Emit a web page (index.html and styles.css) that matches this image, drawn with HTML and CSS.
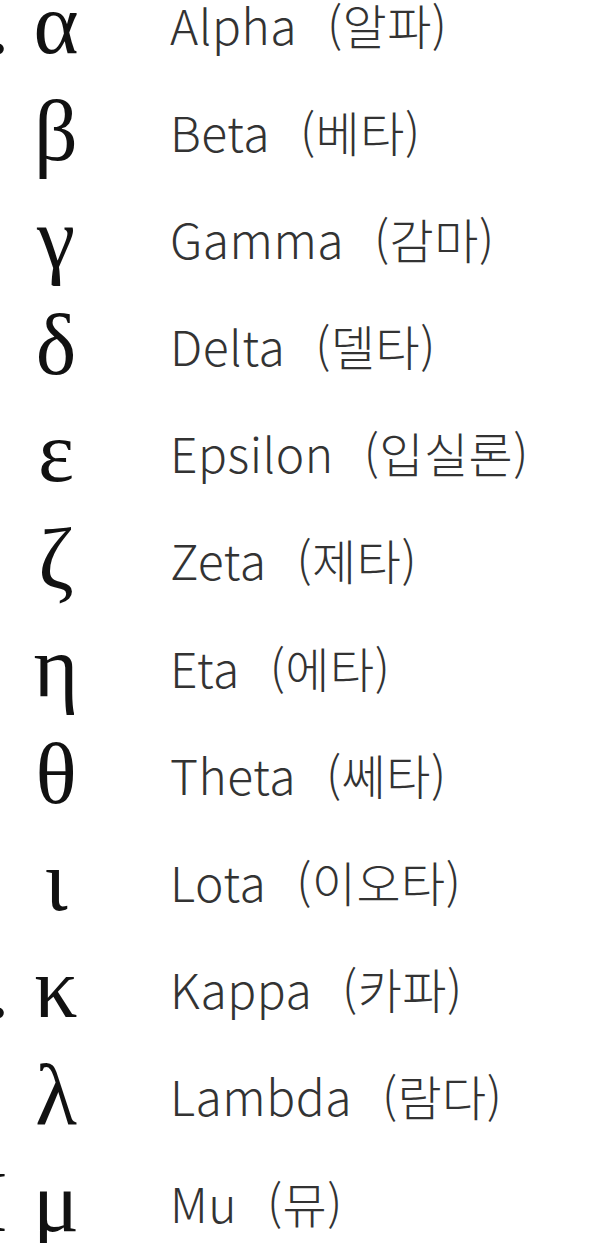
FILE: index.html
```html
<!DOCTYPE html>
<html lang="ko">
<head>
<meta charset="utf-8">
<title>Greek letters</title>
<link rel="stylesheet" href="styles.css">
</head>
<body>
<ul class="list">
  <li class="row"><span class="edge edge-dot">.</span><span class="glyph">α</span><span class="name">Alpha (알파)</span></li>
  <li class="row"><span class="edge"></span><span class="glyph">β</span><span class="name">Beta (베타)</span></li>
  <li class="row"><span class="edge"></span><span class="glyph">γ</span><span class="name">Gamma (감마)</span></li>
  <li class="row"><span class="edge"></span><span class="glyph">δ</span><span class="name">Delta (델타)</span></li>
  <li class="row"><span class="edge"></span><span class="glyph">ε</span><span class="name">Epsilon (입실론)</span></li>
  <li class="row"><span class="edge"></span><span class="glyph">ζ</span><span class="name">Zeta (제타)</span></li>
  <li class="row"><span class="edge"></span><span class="glyph">η</span><span class="name">Eta (에타)</span></li>
  <li class="row"><span class="edge"></span><span class="glyph">θ</span><span class="name">Theta (쎄타)</span></li>
  <li class="row"><span class="edge"></span><span class="glyph">ι</span><span class="name">Lota (이오타)</span></li>
  <li class="row"><span class="edge edge-dot">.</span><span class="glyph">κ</span><span class="name">Kappa (카파)</span></li>
  <li class="row"><span class="edge"></span><span class="glyph">λ</span><span class="name">Lambda (람다)</span></li>
  <li class="row"><span class="edge edge-bar">I</span><span class="glyph">μ</span><span class="name">Mu (뮤)</span></li>
</ul>
</body>
</html>
```

FILE: styles.css
```css
html, body {
  margin: 0;
  padding: 0;
  background: #ffffff;
  overflow: hidden;
}

.list {
  list-style: none;
  margin: 0;
  padding: 0;
}

.row {
  height: 107.1px;
  font-size: 0;
  line-height: 0;
  white-space: nowrap;
}

.edge {
  display: inline-block;
  width: 8px;
  font-family: "Liberation Serif", serif;
  font-size: 86px;
  line-height: 48px;
  color: #111;
  vertical-align: -8px;
}

.edge-dot {
  text-indent: -12px;
}

.edge-bar {
  text-indent: -21px;
}

.glyph {
  display: inline-block;
  width: 96px;
  text-align: center;
  font-family: "Liberation Serif", "DejaVu Serif", serif;
  font-size: 86px;
  line-height: 48px;
  color: #111;
  vertical-align: -8px;
}

.name {
  display: inline-block;
  margin-left: 66px;
  font-family: "Noto Sans CJK KR", sans-serif;
  font-weight: 200;
  font-size: 48px;
  line-height: 48px;
  letter-spacing: 0.5px;
  word-spacing: 16px;
  color: #333;
}
```
